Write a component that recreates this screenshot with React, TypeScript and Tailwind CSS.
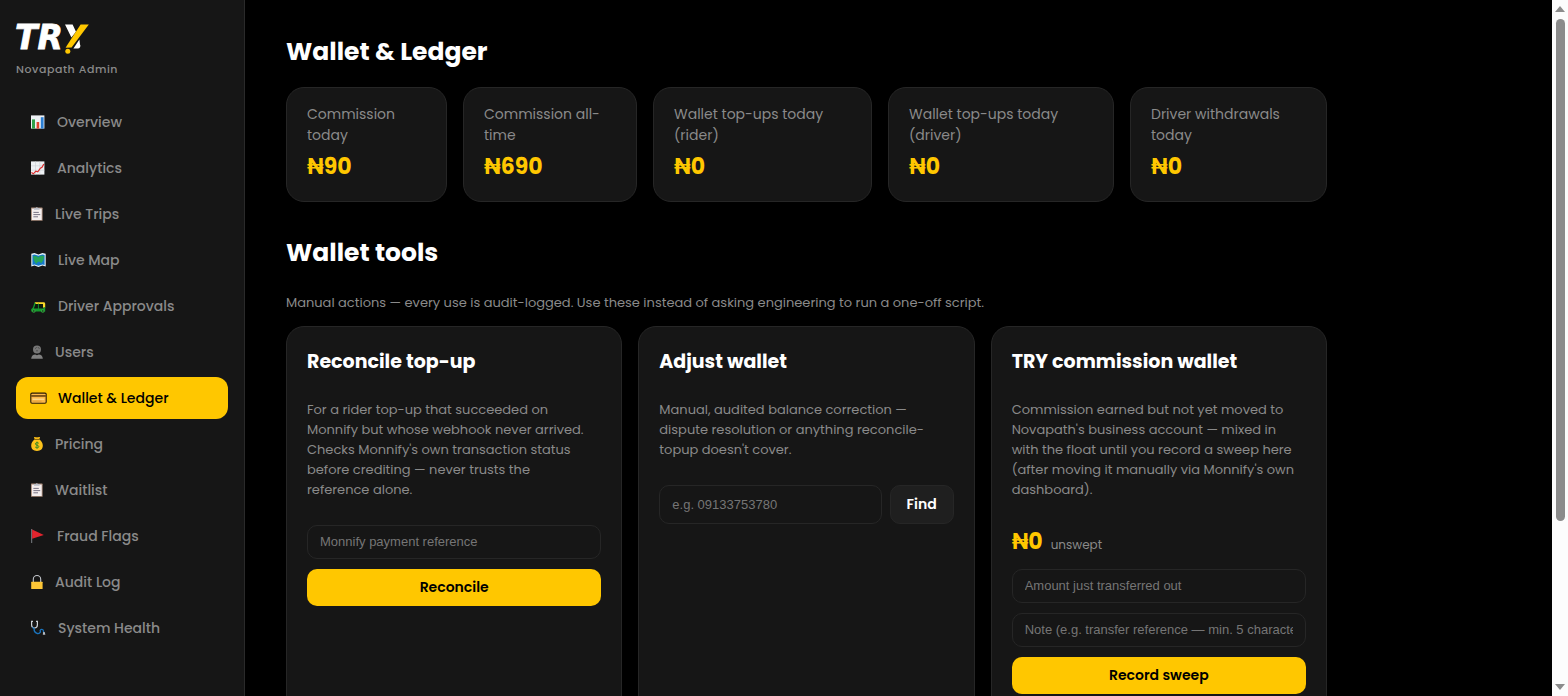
import React from "react";
import type { ReactNode } from "react";

type NavItem = { label: string; icon: ReactNode; active?: boolean };
type Stat = { label: string; value: string };

const svgBase = "block shrink-0";

function ChartBarIcon() {
  return (
    <svg className={svgBase} width="16" height="16" viewBox="0 0 16 16" aria-hidden="true">
      <rect x="1" y="1.4" width="13.4" height="13.2" fill="#eef1f4" />
      <rect x="2" y="5.4" width="3" height="9.2" fill="#2fa14a" />
      <rect x="6.6" y="8" width="2.6" height="6.6" fill="#e0452f" />
      <rect x="10.8" y="3.2" width="2.8" height="11.4" fill="#2b7fd4" />
    </svg>
  );
}

function ChartLineIcon() {
  return (
    <svg className={svgBase} width="16" height="16" viewBox="0 0 16 16" aria-hidden="true">
      <rect x="1" y="1.4" width="13.4" height="13.2" fill="#eef1f4" />
      <path d="M5.5 1.4v13.2M9.8 1.4v13.2M1 5.8h13.4M1 10.2h13.4" stroke="#c9ced4" strokeWidth=".6" />
      <path d="M1.4 12.4l2 1.4 2.4-2.6 2 .6 2.6-3.6 1.6-.8 1.8-3.4" fill="none" stroke="#dd2c2c" strokeWidth="1.2" />
    </svg>
  );
}

function ClipboardIcon() {
  return (
    <svg className={svgBase} width="14" height="16" viewBox="0 0 14 16" aria-hidden="true">
      <rect x="1" y="1.6" width="11.6" height="13.2" rx=".6" fill="#a98c7c" />
      <rect x="1.9" y="2.6" width="9.8" height="11.4" fill="#f4eeee" />
      <path d="M4 3.8V1.9h1.7a1.2 1.2 0 0 1 2.2 0h1.7v1.9z" fill="#b9bdc6" />
      <path d="M3.4 6.4h5.4M3.4 8.6h6.8M3.4 10.8h4.6" stroke="#6b6578" strokeWidth=".9" />
    </svg>
  );
}

function MapIcon() {
  return (
    <svg className={svgBase} width="17" height="16" viewBox="0 0 17 16" aria-hidden="true">
      <path d="M1.3 1.8l3.2-.8 3.9 1.4 4-1.4 3.3.8v12.8l-3.3-1-4 1.3-3.9-1.3-3.2 1z" fill="#e4f3fb" />
      <path d="M2.4 3l2.2-.6 3.8 1.4 4-1.4 2.2.6v10l-2.2-.6-4 1.3-3.8-1.3-2.2.6z" fill="#1579c9" />
      <path d="M3 4.3l3.4-.4 1.8 1.6 1-1 3-.9 2 1-.8 3.4-2.2 3.2-1.9-1.6-1.9.6-1.2 1.8-2-3z" fill="#27a65a" />
    </svg>
  );
}

function RickshawIcon() {
  return (
    <svg className={svgBase} width="17" height="16" viewBox="0 0 17 16" aria-hidden="true">
      <path d="M4.8 4.2h8.8c1 0 1.6.6 1.6 1.5v4H13V6H5z" fill="#fbd92a" />
      <path d="M4.6 4.3L2.9 9.4l-1.7 1.8v2.2h14V9.2h-1.7v1.2H8.8V5.6h-.9v4.8H4l1.8-4.8z" fill="#159a2d" />
      <path d="M5.6 6h2v4H4.4zM9 6h3.4v4H9z" fill="#0b1a0d" />
      <circle cx="3.8" cy="13" r="1.8" fill="#2fa83c" />
      <circle cx="3.8" cy="13" r=".7" fill="#161616" />
      <circle cx="12.8" cy="13" r="1.8" fill="#2fa83c" />
      <circle cx="12.8" cy="13" r=".7" fill="#161616" />
    </svg>
  );
}

function UserIcon() {
  return (
    <svg className={svgBase} width="14" height="16" viewBox="0 0 14 16" aria-hidden="true">
      <circle cx="7" cy="5.4" r="4" fill="#777" />
      <path d="M5.2 4.6l1.5-1.2M8 3.2l1.4 1.6M6.2 6.8h1.6" stroke="#333" strokeWidth=".7" />
      <path d="M1.2 14.8c0-3 2-4.4 4-4.4l1.8.9 1.8-.9c2 0 4 1.4 4 4.4z" fill="#808080" />
    </svg>
  );
}

function CardIcon() {
  return (
    <svg className={svgBase} width="17" height="16" viewBox="0 0 17 16" aria-hidden="true">
      <rect x=".8" y="3.1" width="15.4" height="10.2" rx="1.2" fill="#fcb84a" stroke="#2b1b05" strokeWidth="1.1" />
      <rect x="1.2" y="5.2" width="14.6" height="1.5" fill="#5c3a0c" />
      <path d="M2.6 9.2h11.6" stroke="#fde0a0" strokeWidth="1.1" />
      <path d="M2.6 11.2h9" stroke="#d99a3a" strokeWidth=".8" />
    </svg>
  );
}

function MoneyBagIcon() {
  return (
    <svg className={svgBase} width="14" height="16" viewBox="0 0 14 16" aria-hidden="true">
      <path d="M3.9 1h1.4l.8.6.9-.6.9.6.8-.6h1.4l-.9 2.5H4.8z" fill="#f5b917" />
      <path d="M4.5 3.4h5c2 1.4 3.3 3.7 3.3 6.2 0 3.4-1.9 5.4-5.8 5.4s-5.8-2-5.8-5.4c0-2.5 1.3-4.8 3.3-6.2z" fill="#fcc21b" />
      <path d="M4.4 3.5h5.2" stroke="#8a6508" strokeWidth=".9" />
      <path d="M8.8 7.3C8 6.2 5.4 6.3 5.4 7.9c0 1.7 3.4 1 3.4 2.7 0 1.6-2.8 1.6-3.6.4M7 5.6v7" fill="none" stroke="#3b8a24" strokeWidth="1" />
    </svg>
  );
}

function FlagIcon() {
  return (
    <svg className={svgBase} width="16" height="16" viewBox="0 0 16 16" aria-hidden="true">
      <path d="M1.7 1v14" stroke="#7b7f86" strokeWidth="1" />
      <path d="M2.1 1.6L13.8 7 2.1 10.8z" fill="#e3242e" />
    </svg>
  );
}

function LockIcon() {
  return (
    <svg className={svgBase} width="14" height="16" viewBox="0 0 14 16" aria-hidden="true">
      <path d="M3.3 8V5.2a3.7 3.7 0 0 1 7.4 0V8" fill="none" stroke="#c3c6cb" strokeWidth="1.1" />
      <rect x="1.2" y="7.8" width="11.4" height="7.2" rx=".5" fill="#fdc636" />
    </svg>
  );
}

function StethoscopeIcon() {
  return (
    <svg className={svgBase} width="17" height="16" viewBox="0 0 17 16" aria-hidden="true">
      <path d="M3 1.4H1.6v3.4c0 2 1.2 3.2 2.9 3.2s2.9-1.2 2.9-3.2V1.4H6" fill="none" stroke="#ccd2d8" strokeWidth="1.2" />
      <path d="M2.4 7.1l1.7 1.6c-.4 4.2 4.6 6.6 6.4 3.2l-.4-1.3c.5-1.8 3.2-1.6 3.4.4v1.6" fill="none" stroke="#1a74bd" strokeWidth="1.3" />
      <path d="M13.2 12h1.5l.7 2.8h-2.6z" fill="#b7bdc4" />
    </svg>
  );
}

function Logo() {
  return (
    <svg className="block overflow-visible" width="76" height="32" viewBox="0 0 76 32" role="img" aria-label="TRY">
      <text
        x="-1"
        y="27"
        fill="#fff"
        stroke="#fff"
        strokeWidth=".8"
        fontSize="33"
        fontStyle="italic"
        fontWeight="700"
        fontFamily="DejaVu Sans, sans-serif"
      >
        TR
      </text>
      <path d="M49 2.4h7.6l3.4 7.4-4.6 5.6zM63.4 17.4l-6 9h4.2a2.6 2.6 0 0 0 2.4-4z" fill="#fff" />
      <path d="M64.6 2.4h8.2L55.6 25.6l-6 .2 1.2-2z" fill="#ffc700" />
      <circle cx="51.8" cy="29.2" r="2.5" fill="#ffc700" />
    </svg>
  );
}

const navItems: NavItem[] = [
  { label: "Overview", icon: <ChartBarIcon /> },
  { label: "Analytics", icon: <ChartLineIcon /> },
  { label: "Live Trips", icon: <ClipboardIcon /> },
  { label: "Live Map", icon: <MapIcon /> },
  { label: "Driver Approvals", icon: <RickshawIcon /> },
  { label: "Users", icon: <UserIcon /> },
  { label: "Wallet & Ledger", icon: <CardIcon />, active: true },
  { label: "Pricing", icon: <MoneyBagIcon /> },
  { label: "Waitlist", icon: <ClipboardIcon /> },
  { label: "Fraud Flags", icon: <FlagIcon /> },
  { label: "Audit Log", icon: <LockIcon /> },
  { label: "System Health", icon: <StethoscopeIcon /> },
];

const stats: Stat[] = [
  { label: "Commission today", value: "₦90" },
  { label: "Commission all-time", value: "₦690" },
  { label: "Wallet top-ups today (rider)", value: "₦0" },
  { label: "Wallet top-ups today (driver)", value: "₦0" },
  { label: "Driver withdrawals today", value: "₦0" },
];

function Sidebar() {
  return (
    <aside className="w-[245px] shrink-0 border-r border-[#2a2a2a] bg-[#161616] px-4 pt-[22px]">
      <Logo />
      <p className="mt-[5px] text-[11px] leading-5 font-medium tracking-wider text-[#8a8a8a]">Novapath Admin</p>
      <nav className="mt-[22px] flex flex-col gap-1">
        {navItems.map((item) => (
          <a
            key={item.label}
            href="#"
            aria-current={item.active ? "page" : undefined}
            className={
              item.active
                ? "flex items-center gap-[11px] rounded-xl bg-[#ffc700] px-[14px] py-[10px] text-[14px] leading-[22px] font-medium text-black"
                : "flex items-center gap-[11px] rounded-xl px-[14px] py-[10px] text-[14px] leading-[22px] font-medium text-[#8a8a8a]"
            }
          >
            {item.icon}
            {item.label}
          </a>
        ))}
      </nav>
    </aside>
  );
}

function ToolCard({ title, text, children }: { title: string; text: string; children: ReactNode }) {
  return (
    <article className="min-h-[440px] rounded-[18px] border border-[#262626] bg-[#161616] p-5">
      <h3 className="text-[19px] leading-[30px] font-bold text-white">{title}</h3>
      <p className="mt-[23px] mb-[25px] pr-2 text-[13px] leading-5 text-[#8a8a8a]">{text}</p>
      {children}
    </article>
  );
}

function TextField({ label, placeholder }: { label: string; placeholder: string }) {
  return (
    <input
      type="text"
      aria-label={label}
      placeholder={placeholder}
      className="w-full min-w-0 rounded-[10px] border border-[#262626] bg-[#161616] px-3 py-2 font-['Liberation_Sans',Arial,sans-serif] text-[13px] leading-4 text-white placeholder:text-[#757575]"
    />
  );
}

function PrimaryButton({ children }: { children: ReactNode }) {
  return (
    <button type="button" className="w-full rounded-[10px] bg-[#ffc700] py-2 text-[14px] leading-[21px] font-semibold text-black">
      {children}
    </button>
  );
}

function ScrollBar() {
  return (
    <div aria-hidden="true" className="flex w-4 shrink-0 flex-col items-center bg-[#fcfcfc] py-[6px]">
      <svg className="block shrink-0" width="10" height="6" viewBox="0 0 10 6">
        <path d="M5 0l5 6H0z" fill="#8b8b8b" />
      </svg>
      <div className="mt-[7px] h-[502px] w-[9px] rounded-full bg-[#8b8b8b]" />
      <svg className="mt-auto block shrink-0" width="10" height="6" viewBox="0 0 10 6">
        <path d="M5 6l5-6H0z" fill="#8b8b8b" />
      </svg>
    </div>
  );
}

export default function App() {
  return (
    <div className="flex h-screen overflow-hidden bg-black font-[Poppins,Inter,sans-serif]">
      <Sidebar />
      <main className="min-w-0 flex-1 overflow-hidden px-[41px] pt-[33px]">
        <div className="max-w-[1041px]">
          <h1 className="text-[25px] leading-[38px] font-bold text-white">Wallet &amp; Ledger</h1>
          <section className="mt-4 grid grid-cols-[161fr_174fr_219fr_226fr_197fr] gap-4">
            {stats.map((stat) => (
              <div key={stat.label} className="rounded-[18px] border border-[#262626] bg-[#161616] px-5 py-4">
                <p className="text-[14px] leading-[21px] text-[#8a8a8a]">{stat.label}</p>
                <p className="mt-[3px] text-[22px] leading-9 font-bold text-[#ffc700]">{stat.value}</p>
              </div>
            ))}
          </section>

          <h2 className="mt-8 text-[25px] leading-[38px] font-bold text-white">Wallet tools</h2>
          <p className="mt-[21px] text-[13px] leading-5 text-[#8a8a8a]">
            Manual actions — every use is audit-logged. Use these instead of asking engineering to run a one-off script.
          </p>
          <section className="mt-[13px] grid grid-cols-3 gap-4">
            <ToolCard
              title="Reconcile top-up"
              text="For a rider top-up that succeeded on Monnify but whose webhook never arrived. Checks Monnify's own transaction status before crediting — never trusts the reference alone."
            >
              <div className="flex flex-col gap-[10px]">
                <TextField label="Monnify payment reference" placeholder="Monnify payment reference" />
                <PrimaryButton>Reconcile</PrimaryButton>
              </div>
            </ToolCard>
            <ToolCard
              title="Adjust wallet"
              text="Manual, audited balance correction — dispute resolution or anything reconcile-topup doesn't cover."
            >
              <div className="flex gap-2">
                <TextField label="Phone number" placeholder="e.g. 09133753780" />
                <button
                  type="button"
                  className="rounded-[10px] border border-[#262626] bg-[#1f1f1f] px-4 py-2 text-[14px] leading-[21px] font-semibold text-white"
                >
                  Find
                </button>
              </div>
            </ToolCard>
            <ToolCard
              title="TRY commission wallet"
              text="Commission earned but not yet moved to Novapath's business account — mixed in with the float until you record a sweep here (after moving it manually via Monnify's own dashboard)."
            >
              <div className="flex flex-col gap-[10px]">
                <p className="flex items-baseline gap-2">
                  <span className="text-[22px] leading-[34px] font-bold text-[#ffc700]">₦0</span>
                  <span className="text-[12px] leading-4 text-[#8a8a8a]">unswept</span>
                </p>
                <TextField label="Amount" placeholder="Amount just transferred out" />
                <TextField label="Note" placeholder="Note (e.g. transfer reference — min. 5 characters)" />
                <PrimaryButton>Record sweep</PrimaryButton>
              </div>
            </ToolCard>
          </section>
        </div>
      </main>
      <ScrollBar />
    </div>
  );
}
